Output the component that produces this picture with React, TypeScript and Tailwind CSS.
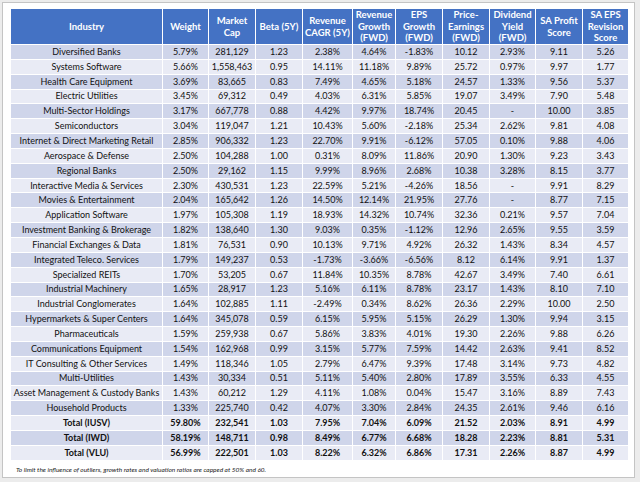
const headers: string[][] = [
  ["Industry"],
  ["Weight"],
  ["Market", "Cap"],
  ["Beta (5Y)"],
  ["Revenue", "CAGR (5Y)"],
  ["Revenue", "Growth", "(FWD)"],
  ["EPS", "Growth", "(FWD)"],
  ["Price-", "Earnings", "(FWD)"],
  ["Dividend", "Yield", "(FWD)"],
  ["SA Profit", "Score"],
  ["SA EPS", "Revision", "Score"],
]

const widths = [152, 46, 47, 47, 50, 43, 47, 47, 46, 47, 46]

const rows: string[][] = [
  ["Diversified Banks", "5.79%", "281,129", "1.23", "2.38%", "4.64%", "-1.83%", "10.12", "2.93%", "9.11", "5.26"],
  ["Systems Software", "5.66%", "1,558,463", "0.95", "14.11%", "11.18%", "9.89%", "25.72", "0.97%", "9.97", "1.77"],
  ["Health Care Equipment", "3.69%", "83,665", "0.83", "7.49%", "4.65%", "5.18%", "24.57", "1.33%", "9.56", "5.37"],
  ["Electric Utilities", "3.45%", "69,312", "0.49", "4.03%", "6.31%", "5.85%", "19.07", "3.49%", "7.90", "5.48"],
  ["Multi-Sector Holdings", "3.17%", "667,778", "0.88", "4.42%", "9.97%", "18.74%", "20.45", "-", "10.00", "3.85"],
  ["Semiconductors", "3.04%", "119,047", "1.21", "10.43%", "5.60%", "-2.18%", "25.34", "2.62%", "9.81", "4.08"],
  ["Internet & Direct Marketing Retail", "2.85%", "906,332", "1.23", "22.70%", "9.91%", "-6.12%", "57.05", "0.10%", "9.88", "4.06"],
  ["Aerospace & Defense", "2.50%", "104,288", "1.00", "0.31%", "8.09%", "11.86%", "20.90", "1.30%", "9.23", "3.43"],
  ["Regional Banks", "2.50%", "29,162", "1.15", "9.99%", "8.96%", "2.68%", "10.38", "3.28%", "8.15", "3.77"],
  ["Interactive Media & Services", "2.30%", "430,531", "1.23", "22.59%", "5.21%", "-4.26%", "18.56", "-", "9.91", "8.29"],
  ["Movies & Entertainment", "2.04%", "165,642", "1.26", "14.50%", "12.14%", "21.95%", "27.76", "-", "8.77", "7.15"],
  ["Application Software", "1.97%", "105,308", "1.19", "18.93%", "14.32%", "10.74%", "32.36", "0.21%", "9.57", "7.04"],
  ["Investment Banking & Brokerage", "1.82%", "138,640", "1.30", "9.03%", "0.35%", "-1.12%", "12.96", "2.65%", "9.55", "3.59"],
  ["Financial Exchanges & Data", "1.81%", "76,531", "0.90", "10.13%", "9.71%", "4.92%", "26.32", "1.43%", "8.34", "4.57"],
  ["Integrated Teleco. Services", "1.79%", "149,237", "0.53", "-1.73%", "-3.66%", "-6.56%", "8.12", "6.14%", "9.91", "1.37"],
  ["Specialized REITs", "1.70%", "53,205", "0.67", "11.84%", "10.35%", "8.78%", "42.67", "3.49%", "7.40", "6.61"],
  ["Industrial Machinery", "1.65%", "28,917", "1.23", "5.16%", "6.11%", "8.78%", "23.17", "1.43%", "8.10", "7.10"],
  ["Industrial Conglomerates", "1.64%", "102,885", "1.11", "-2.49%", "0.34%", "8.62%", "26.36", "2.29%", "10.00", "2.50"],
  ["Hypermarkets & Super Centers", "1.64%", "345,078", "0.59", "6.15%", "5.95%", "5.15%", "26.29", "1.30%", "9.94", "3.15"],
  ["Pharmaceuticals", "1.59%", "259,938", "0.67", "5.86%", "3.83%", "4.01%", "19.30", "2.26%", "9.88", "6.26"],
  ["Communications Equipment", "1.54%", "162,968", "0.99", "3.15%", "5.77%", "7.59%", "14.42", "2.63%", "9.41", "8.52"],
  ["IT Consulting & Other Services", "1.49%", "118,346", "1.05", "2.79%", "6.47%", "9.39%", "17.48", "3.14%", "9.73", "4.82"],
  ["Multi-Utilities", "1.43%", "30,334", "0.51", "5.11%", "5.40%", "2.80%", "17.89", "3.55%", "6.33", "4.55"],
  ["Asset Management & Custody Banks", "1.43%", "60,212", "1.29", "4.11%", "1.08%", "0.04%", "15.47", "3.16%", "8.89", "7.43"],
  ["Household Products", "1.33%", "225,740", "0.42", "4.07%", "3.30%", "2.84%", "24.35", "2.61%", "9.46", "6.16"],
]

const totals: string[][] = [
  ["Total (IUSV)", "59.80%", "232,541", "1.03", "7.95%", "7.04%", "6.09%", "21.52", "2.03%", "8.91", "4.99"],
  ["Total (IWD)", "58.19%", "148,711", "0.98", "8.49%", "6.77%", "6.68%", "18.28", "2.23%", "8.81", "5.31"],
  ["Total (VLU)", "56.99%", "222,501", "1.03", "8.22%", "6.32%", "6.86%", "17.31", "2.26%", "8.87", "4.99"],
]

export default function App() {
  const all = [...rows.map((r) => ({ r, bold: false })), ...totals.map((r) => ({ r, bold: true }))]

  return (
    <div className="w-[640px] h-[482px] bg-[#ececec] p-[2px] font-['Lato','Liberation_Sans',sans-serif]">
      <div className="w-[633px] h-[476px] bg-white border border-[#c4c4c4] pl-[7px] pt-[5px] flex flex-col">
        <table className="table-fixed border-collapse w-[618px] text-[9px] text-[#111]">
          <colgroup>
            {widths.map((w, i) => (
              <col key={i} style={{ width: w }} />
            ))}
          </colgroup>
          <thead>
            <tr className="h-[36px] bg-[#4472c4]">
              {headers.map((h, i) => (
                <th key={i} className="border border-white text-white text-[9.5px] font-bold leading-[11.5px] text-center align-middle p-0">
                  {h.map((line, j) => (
                    <div key={j}>{line}</div>
                  ))}
                </th>
              ))}
            </tr>
          </thead>
          <tbody>
            {all.map(({ r, bold }, i) => (
              <tr key={i} className={`h-[14.85px] ${i % 2 === 0 ? "bg-[#cfd5ea]" : "bg-[#e9ebf5]"} ${bold ? "font-bold" : ""}`}>
                {r.map((c, j) => (
                  <td key={j} className="border border-white text-center leading-[12px] p-0 whitespace-nowrap">
                    {c}
                  </td>
                ))}
              </tr>
            ))}
          </tbody>
        </table>
        <div className="pl-[6px] mt-[4px] text-[6.5px] italic text-[#222] leading-[9px]">
          To limit the influence of outliers, growth rates and valuation ratios are capped at 50% and 60.
        </div>
      </div>
    </div>
  )
}
